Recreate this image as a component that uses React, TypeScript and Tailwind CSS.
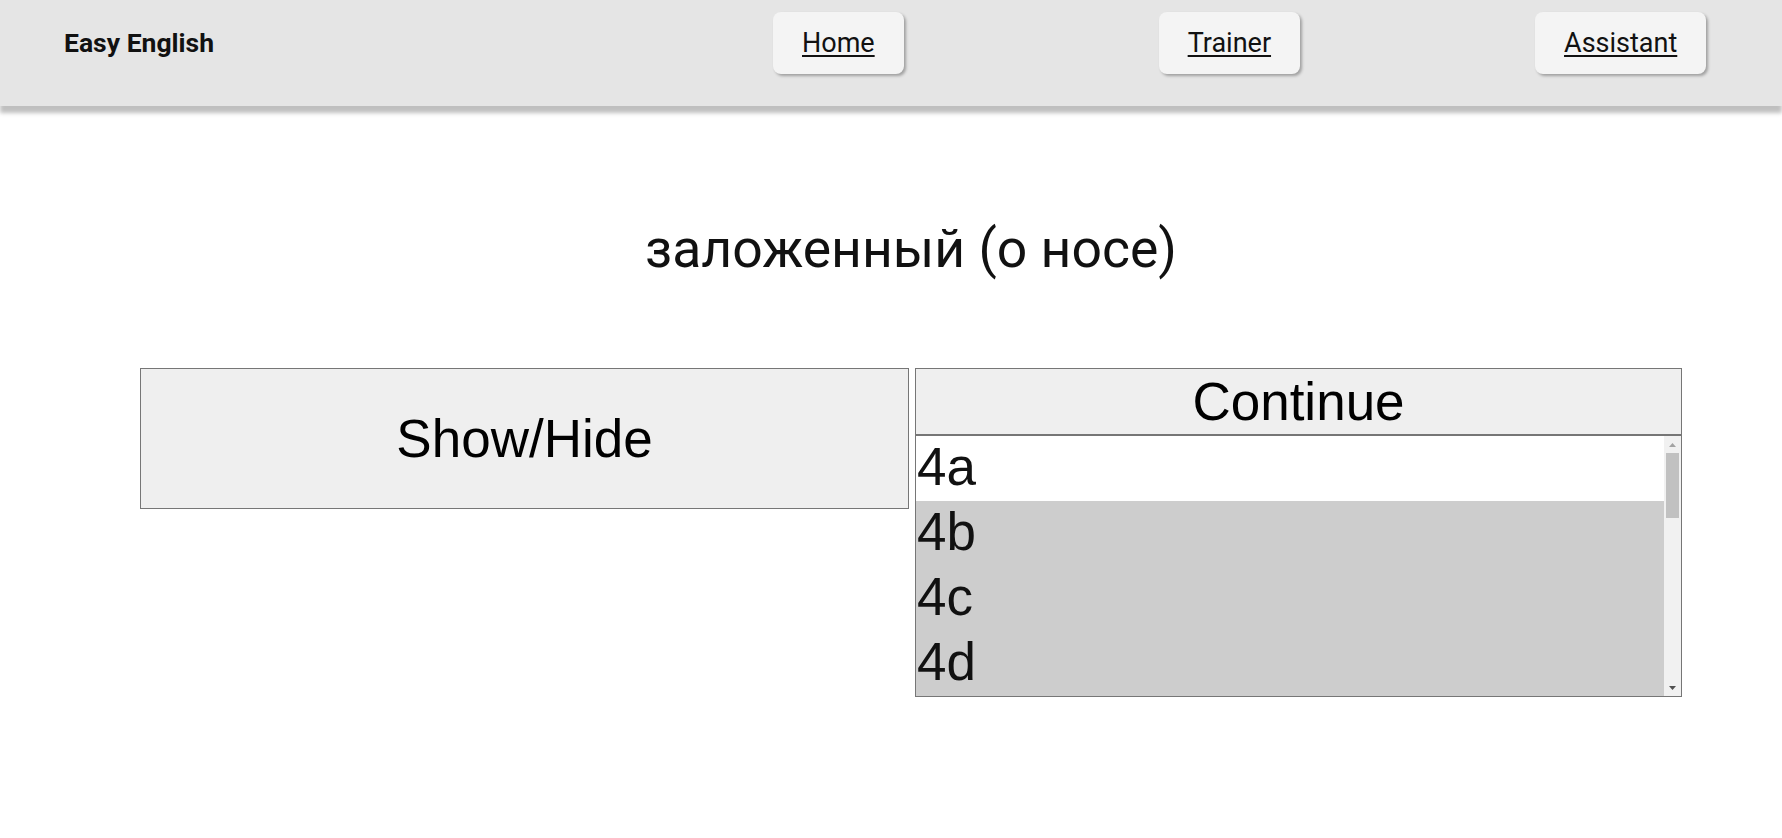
import type { JSX } from "react";

const options = [
  { label: "4a", selected: false },
  { label: "4b", selected: true },
  { label: "4c", selected: true },
  { label: "4d", selected: true },
];

const Header = (): JSX.Element => {
  return (
    <header className="relative z-10 h-[106px] w-full bg-[#e5e5e5] pt-[12px] font-['Roboto',sans-serif] text-[27px] text-[#111] shadow-[0_7px_4px_rgba(0,0,0,0.25)]">
      <div className="flex h-[62px] items-center">
        <span className="w-[214px] shrink-0 pl-[64px] text-[26.5px] font-bold">
          Easy English
        </span>
        <a
          href="#"
          className="ml-[559px] flex h-full items-center rounded-[8px] bg-[#f4f4f4] px-[29px] underline underline-offset-[3px] shadow-[2px_2px_3px_rgba(0,0,0,0.3)]"
        >
          Home
        </a>
        <a
          href="#"
          className="ml-[255px] flex h-full items-center rounded-[8px] bg-[#f4f4f4] px-[29px] underline underline-offset-[3px] shadow-[2px_2px_3px_rgba(0,0,0,0.3)]"
        >
          Trainer
        </a>
        <a
          href="#"
          className="ml-[235px] flex h-full items-center rounded-[8px] bg-[#f4f4f4] px-[29px] underline underline-offset-[3px] shadow-[2px_2px_3px_rgba(0,0,0,0.3)]"
        >
          Assistant
        </a>
      </div>
    </header>
  );
};

const ScrollTrack = (): JSX.Element => {
  return (
    <div className="flex w-[17px] shrink-0 flex-col items-center bg-[#f1f1f1]">
      <div className="flex h-[17px] w-full items-center justify-center">
        <svg width="7" height="4" viewBox="0 0 7 4">
          <polygon points="3.5,0 7,4 0,4" fill="#a3a3a3" />
        </svg>
      </div>
      <div className="h-[65px] w-[13px] bg-[#c1c1c1]" />
      <div className="flex-1" />
      <div className="flex h-[17px] w-full items-center justify-center">
        <svg width="7" height="4" viewBox="0 0 7 4">
          <polygon points="0,0 7,0 3.5,4" fill="#505050" />
        </svg>
      </div>
    </div>
  );
};

export default function App(): JSX.Element {
  return (
    <div className="min-h-screen w-full bg-white">
      <Header />
      <main className="flex flex-col pl-[140px] pr-[100px] font-['Liberation_Sans',Arial,sans-serif] text-black">
        <h1 className="mt-[111px] text-center font-['Roboto',sans-serif] text-[53.5px] leading-[63px] text-[#111]">
          заложенный (о носе)
        </h1>
        <div className="mt-[88px] flex items-start gap-[6px]">
          <button className="h-[141px] flex-1 border border-[#767676] bg-[#efefef] text-[53px] leading-none">
            Show/Hide
          </button>
          <div className="flex flex-1 flex-col">
            <button className="h-[67px] w-full border border-[#767676] bg-[#efefef] text-[53px] leading-none">
              Continue
            </button>
            <div className="flex h-[262px] w-full border border-[#767676] bg-white">
              <div className="flex flex-1 flex-col overflow-hidden">
                {options.map((o) => (
                  <div
                    key={o.label}
                    className={
                      o.selected
                        ? "h-[65px] shrink-0 bg-[#cdcdcd] px-[1px] text-[53px] leading-[61px] text-[#111]"
                        : "h-[65px] shrink-0 bg-white px-[1px] text-[53px] leading-[61px] text-[#111]"
                    }
                  >
                    {o.label}
                  </div>
                ))}
              </div>
              <ScrollTrack />
            </div>
          </div>
        </div>
      </main>
    </div>
  );
}
